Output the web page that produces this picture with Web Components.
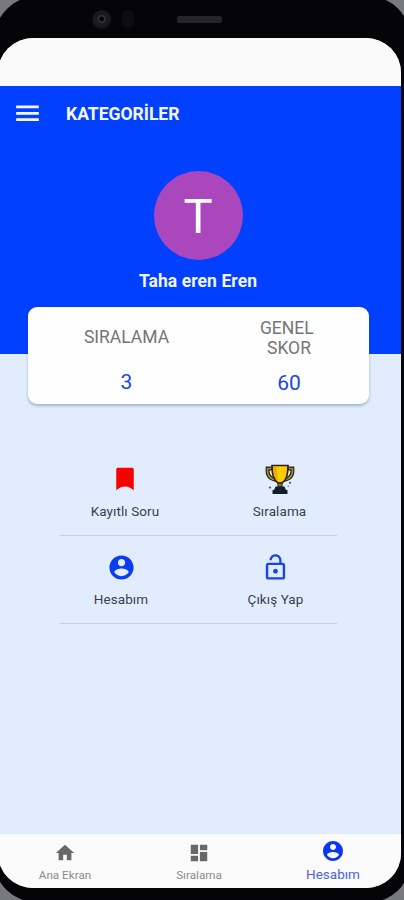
<!DOCTYPE html>
<html lang="tr">
<head>
<meta charset="utf-8">
<title>Kategoriler</title>
<style>
html,body{margin:0;height:100%;overflow:hidden;background:#77797b}
body{font-family:Roboto,"Noto Sans",sans-serif}
</style>
</head>
<body>
<phone-frame>
  <app-bar>KATEGORİLER</app-bar>
  <profile-hero initial="T">Taha eren Eren</profile-hero>
  <score-card>
    <score-item value="3" style="--w:197px;--top:20px;--gap:25px">SIRALAMA</score-item>
    <score-item value="60" style="--w:128px;--top:11px;--gap:15px">GENEL&nbsp;<br>SKOR</score-item>
  </score-card>
  <menu-grid>
    <menu-row>
      <menu-item icon="bookmark" style="--w:130px">Kayıtlı Soru</menu-item>
      <menu-item icon="trophy" style="--w:179px">Sıralama</menu-item>
    </menu-row>
    <menu-row>
      <menu-item icon="account" style="--w:122px">Hesabım</menu-item>
      <menu-item icon="lock" style="--w:187px">Çıkış Yap</menu-item>
    </menu-row>
  </menu-grid>
  <nav-bar>
    <nav-item icon="home">Ana Ekran</nav-item>
    <nav-item icon="dashboard">Sıralama</nav-item>
    <nav-item icon="account" active>Hesabım</nav-item>
  </nav-bar>
</phone-frame>
<script>
const ICONS = {
  menu:'<svg viewBox="0 0 24 18"><path fill="currentColor" d="M0 .6h24v2.900H0zM0 7.300h24v2.900H0zM0 14h24v2.900H0z"/></svg>',
  bookmark:'<svg viewBox="0 0 24 24"><path fill="currentColor" d="M17.500 3h-11C5.700 3 5 3.500 5 4.300V21c2-1.800 4.500-3 7-3s5 1.200 7 3V4.300c0-.8-.7-1.300-1.500-1.300z"/></svg>',
  account:'<svg viewBox="0 0 24 24"><path fill="currentColor" d="M12 2C6.480 2 2 6.480 2 12s4.480 10 10 10 10-4.480 10-10S17.520 2 12 2zm0 3c1.660 0 3 1.340 3 3s-1.340 3-3 3-3-1.340-3-3 1.340-3 3-3zm0 14.200c-2.500 0-4.710-1.280-6-3.220.03-1.990 4-3.080 6-3.080 1.990 0 5.970 1.090 6 3.080-1.290 1.940-3.500 3.220-6 3.220z"/></svg>',
  lock:'<svg viewBox="0 0 24 24"><path fill="currentColor" d="M12 17c1.100 0 2-.9 2-2s-.9-2-2-2-2 .9-2 2 .9 2 2 2zm6-9h-1V6c0-2.760-2.240-5-5-5S7 3.240 7 6h1.900c0-1.710 1.390-3.100 3.100-3.100s3.100 1.390 3.100 3.100v2H6c-1.100 0-2 .9-2 2v10c0 1.100.9 2 2 2h12c1.100 0 2-.9 2-2V10c0-1.100-.9-2-2-2zm0 12H6V10h12v10z"/></svg>',
  home:'<svg viewBox="0 0 24 24"><path fill="currentColor" d="M10 20v-6h4v6h5v-8h3L12 3 2 12h3v8z"/></svg>',
  dashboard:'<svg viewBox="0 0 24 24"><path fill="currentColor" d="M3 13h8V3H3v10zm0 8h8v-6H3v6zm10 0h8V11h-8v10zm0-18v6h8V3h-8z"/></svg>',
  trophy:`<svg viewBox="0 0 32 32">
    <g fill="none" stroke="#27231a" stroke-width="3.800"><path d="M9 5.500H3.500C3 11 5 16 12.500 17M23 5.500h5.500C29 11 27 16 19.500 17"/></g>
    <g fill="none" stroke="#a88a2e" stroke-width="1.500"><path d="M9 5.500H3.500C3 11 5 16 12.500 17M23 5.500h5.500C29 11 27 16 19.500 17"/></g>
    <path d="M8 2.500h16c0 8-1 15-6 17.500h-4C9 17 8 10.500 8 2.500z" fill="#fc0" stroke="#27231a" stroke-width="1.700"/>
    <path d="M9.500 4h3l1.500 14.500C11 15 9.500 10 9.500 4z" fill="#e9ad08"/>
    <path d="M14 20h4v4h-4z" fill="#8f731c" stroke="#161922"/>
    <path d="M11.500 23.500h9l1.500 3.500H23.500v4h-15v-4H10z" fill="#151d2b"/>
    <path d="M6 23.300l1.300 1.300L6 26l-1.300-1.400zM26 18.500l1.300 1.300-1.300 1.300-1.300-1.300z" fill="#46505c"/>
    <path d="M23.500 22.500h1.400v1.400h-1.400z" fill="#7b8691"/></svg>`
};
function define(name, render){
  customElements.define(name, class extends HTMLElement{
    constructor(){ super(); this.attachShadow({mode:'open'}); }
    connectedCallback(){ this.shadowRoot.innerHTML = render(this); }
  });
}
define('ui-icon', el => `<style>:host{display:block;flex:none}svg{display:block;width:100%;height:100%}</style>${ICONS[el.getAttribute('name')]}`);

define('phone-frame', () => `<style>
:host{display:block;position:relative;box-sizing:border-box;width:404px;height:900px;overflow:hidden;background:#77797b}
.body{box-sizing:border-box;width:416px;height:906px;margin-left:-6px;margin-top:-4px;padding:42px 0 0 4px;background:#050507;border-radius:44px 42px 40px 42px}
.screen{display:flex;flex-direction:column;width:403px;height:850px;border-radius:35px;overflow:hidden;background:#e1edfe}
.status{flex:none;height:48px;background:#fafafa}
.cam{position:absolute;left:92px;top:10px;width:20px;height:20px;border-radius:50%;background:radial-gradient(circle at 48% 45%,#08080a 2px,#39393c 3px,#19191b 5px,#1b1b1d 8px,#09090b 10px)}
.sensor{position:absolute;left:122px;top:10px;width:12px;height:18px;border-radius:5px;background:#0d0d0f}
.speaker{position:absolute;left:177px;top:16px;width:45px;height:7px;border-radius:2px;background:#252527}
</style><div class="body"><div class="screen"><div class="status"></div><slot></slot></div></div>
<i class="cam"></i><i class="sensor"></i><i class="speaker"></i>`);

define('app-bar', () => `<style>
:host{display:flex;flex:none;align-items:center;box-sizing:border-box;height:54px;padding:0 18px;gap:27px;background:#0040fe;color:#f3f6ff;font:700 17.600px/24px Roboto,sans-serif}
ui-icon{width:23px;height:17px}span{padding-top:2px;letter-spacing:-.05px}
</style><ui-icon name="menu"></ui-icon><span><slot></slot></span>`);

define('profile-hero', el => `<style>
:host{display:flex;flex:none;flex-direction:column;align-items:center;box-sizing:border-box;height:214px;padding:31px 3px 0 0;background:#0040fe;color:#eef3ff;font:700 17.500px/24px Roboto,sans-serif}
.av{display:flex;align-items:center;justify-content:center;box-sizing:border-box;padding-top:2px;width:89px;height:89px;border-radius:50%;background:#ab47bc;color:#fff;font-size:49px;font-weight:400}
.name{margin-top:9px;letter-spacing:.08px}
</style><div class="av">${el.getAttribute('initial')}</div><div class="name"><slot></slot></div>`);

define('score-card', () => `<style>
:host{display:flex;flex:none;position:relative;box-sizing:border-box;width:341px;height:97px;margin:-47px 0 0 30px;border-radius:9px;background:#fefefe;box-shadow:0 2px 3px rgba(60,75,95,.35)}
</style><slot></slot>`);

define('score-item', el => `<style>
:host{display:flex;flex-direction:column;align-items:center;width:var(--w);padding-top:var(--top);gap:var(--gap);text-align:center;color:#757575;font:400 17.500px/20px Roboto,sans-serif}
b{font-weight:400;font-size:21px;color:#1a46e8}
</style><span><slot></slot></span><b>${el.getAttribute('value')}</b>`);

define('menu-grid', () => `<style>:host{display:block;flex:1;padding:44px 0 0 62px}</style><slot></slot>`);
define('menu-row', () => `<style>:host{display:flex;box-sizing:border-box;width:277px;height:88px;border-bottom:1px solid #c5d0df}</style><slot></slot>`);
define('menu-item', el => `<style>
:host{display:flex;flex:none;flex-direction:column;align-items:center;width:var(--w);color:#39414b;font:400 13.500px/18px Roboto,sans-serif;letter-spacing:.08px;white-space:nowrap}
.box{display:flex;align-items:center;justify-content:center;height:32px;margin-top:15px}
.bookmark{width:30px;height:30px;color:#f80000}.trophy{width:32px;height:32px}.account{width:29px;height:29px;color:#0b3df0}.lock{width:29px;height:29px;color:#1a43f0}
span{margin-top:7px}
</style><div class="box"><ui-icon class="${el.getAttribute('icon')}" name="${el.getAttribute('icon')}"></ui-icon></div><span><slot></slot></span>`);

define('nav-bar', () => `<style>:host{display:flex;flex:none;height:54px;background:#fbfbfb;padding-right:1px}</style><slot></slot>`);
define('nav-item', el => `<style>
:host{display:flex;flex:1;flex-direction:column;align-items:center;padding-top:8px;color:#8b8b8b;font:400 11.700px/14px Roboto,sans-serif;white-space:nowrap}
ui-icon{width:22px;height:22px;color:#686868}
span{margin-top:4px}
:host([active]){padding-top:5px;color:#4763ef;font-size:13.500px}
:host([active]) ui-icon{width:24px;height:24px;color:#0b36f5}
</style><ui-icon name="${el.getAttribute('icon')}"></ui-icon><span><slot></slot></span>`);
</script>
</body>
</html>
